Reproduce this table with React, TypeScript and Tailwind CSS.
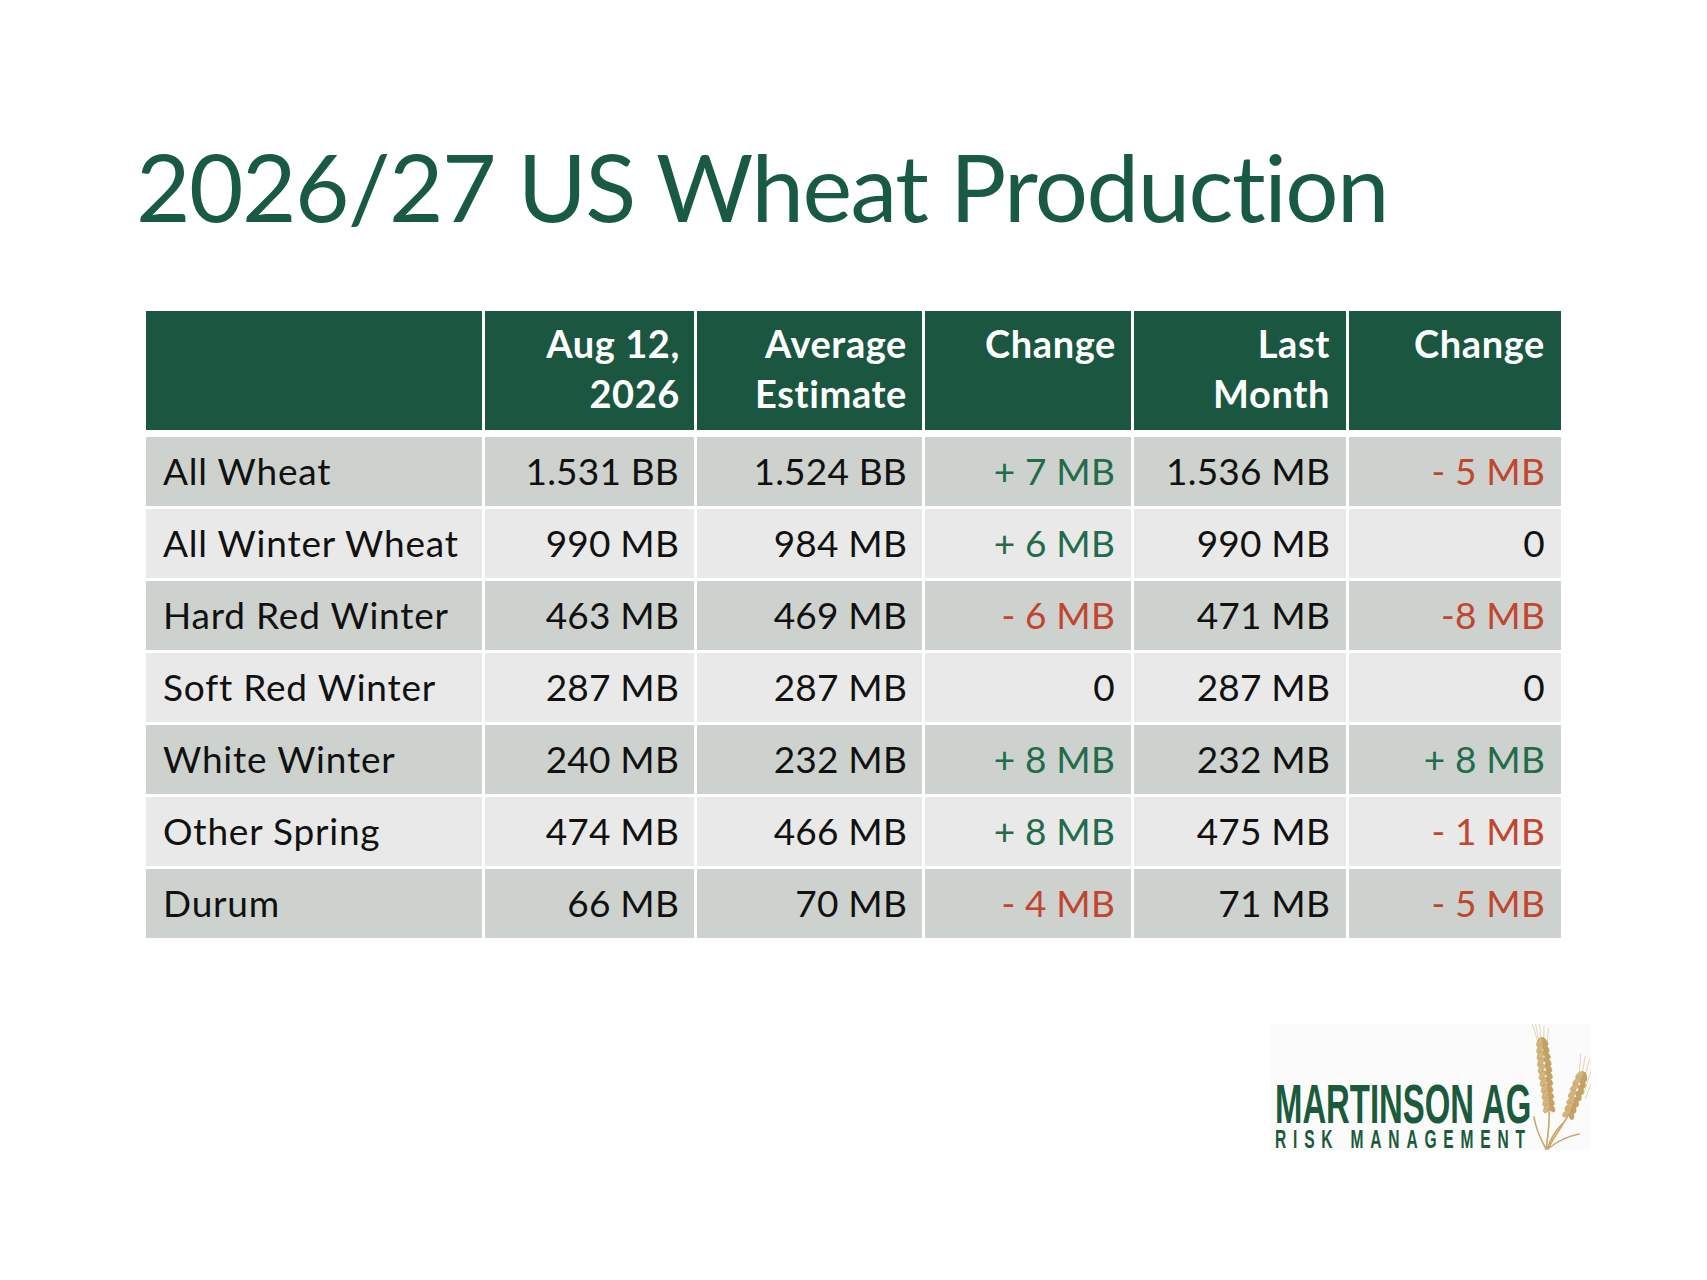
import React from "react";

const rows = [
  { name: "All Wheat", aug: "1.531 BB", avg: "1.524 BB", ch1: "+ 7 MB", last: "1.536 MB", ch2: "- 5 MB" },
  { name: "All Winter Wheat", aug: "990 MB", avg: "984 MB", ch1: "+ 6 MB", last: "990 MB", ch2: "0" },
  { name: "Hard Red Winter", aug: "463 MB", avg: "469 MB", ch1: "- 6 MB", last: "471 MB", ch2: "-8 MB" },
  { name: "Soft Red Winter", aug: "287 MB", avg: "287 MB", ch1: "0", last: "287 MB", ch2: "0" },
  { name: "White Winter", aug: "240 MB", avg: "232 MB", ch1: "+ 8 MB", last: "232 MB", ch2: "+ 8 MB" },
  { name: "Other Spring", aug: "474 MB", avg: "466 MB", ch1: "+ 8 MB", last: "475 MB", ch2: "- 1 MB" },
  { name: "Durum", aug: "66 MB", avg: "70 MB", ch1: "- 4 MB", last: "71 MB", ch2: "- 5 MB" },
];

const changeColor = (v: string) => {
  if (v.startsWith("+")) return "text-[#226b4b]";
  if (v.startsWith("-")) return "text-[#c2452d]";
  return "text-[#111]";
};

// one ear of wheat, from top (x0,y0) to bottom (x1,y1)
const Head = ({ x0, y0, x1, y1, n }: { x0: number; y0: number; x1: number; y1: number; n: number }) => {
  const dx = x1 - x0;
  const dy = y1 - y0;
  const len = Math.sqrt(dx * dx + dy * dy);
  const ux = dx / len;
  const uy = dy / len;
  const ang = (Math.atan2(dy, dx) * 180) / Math.PI - 90;
  const grains = [];
  for (let i = 0; i < n; i++) {
    const t = i / (n - 1);
    const cx = x0 + dx * t;
    const cy = y0 + dy * t;
    const w = 2.4 + 1.1 * Math.sin(Math.PI * Math.min(1, t * 1.4));
    for (const s of [-1, 1]) {
      const gx = cx + s * -uy * w;
      const gy = cy + s * ux * w;
      grains.push(
        <ellipse
          key={`${i}${s}`}
          cx={gx}
          cy={gy}
          rx={2.5}
          ry={5}
          transform={`rotate(${ang + s * 30} ${gx} ${gy})`}
          fill={s < 0 ? "#c6a264" : "#d4b57e"}
          stroke="#b8925a"
          strokeWidth={0.4}
        />
      );
    }
  }
  return (
    <g>
      {[0, 1, 2, 3, 4].map((k) => (
        <line
          key={k}
          x1={x0 + (k - 2) * 1.6}
          y1={y0 + 3 + k * 5}
          x2={x0 - ux * 24 + (k - 2) * 4.5}
          y2={y0 - uy * 24 + k * 2.5}
          stroke="#dccaa4"
          strokeWidth={0.8}
        />
      ))}
      {grains}
    </g>
  );
};

const Wheat = () => (
  <svg width="66" height="127" viewBox="0 0 66 127" className="shrink-0">
    <g fill="none" stroke="#c9a66b" strokeWidth="1.6" strokeLinecap="round">
      <path d="M24 84 C 25 100, 23 112, 21 125" />
      <path d="M44 90 C 36 104, 28 114, 23 125" />
      <path d="M21 125 C 16 116, 11 106, 9 93" />
      <path d="M22 125 C 26 114, 31 106, 37 100" />
      <path d="M24 124 C 34 116, 44 112, 54 110" />
    </g>
    <Head x0={17} y0={18} x1={24} y1={84} n={11} />
    <Head x0={57} y0={52} x1={44} y1={90} n={7} />
  </svg>
);

const cols = "grid grid-cols-[336px_209px_225px_206px_212px_212px] gap-x-[3px]";

const App = () => {
  return (
    <div className="w-full h-[1280px] bg-white overflow-hidden font-['Lato',sans-serif]">
      <h1 className="pt-[139px] pl-[136px] text-[94px] leading-none tracking-[-1.5px] text-[#185b42] [font-variant-ligatures:none]">
        2026/27 US Wheat Production
      </h1>

      <div className="mt-[78px] ml-[146px] w-[1415px]">
        <div className={`${cols} text-[38px] leading-[50px] tracking-[0.6px] font-bold text-white text-right`}>
          <div className="h-[119px] bg-[#1a5640]" />
          <div className="h-[119px] bg-[#1a5640] pt-[7px] pr-[14px]">
            Aug 12,
            <br />
            2026
          </div>
          <div className="h-[119px] bg-[#1a5640] pt-[7px] pr-[15px]">
            Average
            <br />
            Estimate
          </div>
          <div className="h-[119px] bg-[#1a5640] pt-[7px] pr-[15px]">Change</div>
          <div className="h-[119px] bg-[#1a5640] pt-[7px] pr-[16px]">
            Last
            <br />
            Month
          </div>
          <div className="h-[119px] bg-[#1a5640] pt-[7px] pr-[16px]">Change</div>
        </div>

        <div className="mt-[7px] flex flex-col gap-y-[3px] text-[37px] leading-none tracking-[0.2px] text-[#111]">
          {rows.map((r, i) => {
            const bg = i % 2 === 0 ? "bg-[#cdd2ce]" : "bg-[#e8e9e8]";
            return (
              <div key={r.name} className={`${cols} h-[69px]`}>
                <div className={`${bg} flex items-center pl-[17px] pb-[2px] tracking-[0.8px]`}>{r.name}</div>
                <div className={`${bg} flex items-center justify-end pr-[15px] pb-[2px]`}>{r.aug}</div>
                <div className={`${bg} flex items-center justify-end pr-[15px] pb-[2px]`}>{r.avg}</div>
                <div className={`${bg} flex items-center justify-end pr-[16px] pb-[2px] ${changeColor(r.ch1)}`}>
                  {r.ch1}
                </div>
                <div className={`${bg} flex items-center justify-end pr-[16px] pb-[2px]`}>{r.last}</div>
                <div className={`${bg} flex items-center justify-end pr-[16px] pb-[2px] ${changeColor(r.ch2)}`}>
                  {r.ch2}
                </div>
              </div>
            );
          })}
        </div>
      </div>

      <div className="mt-[86px] flex justify-end pr-[116px]">
        <div className="w-[321px] h-[127px] bg-[#fbfbfb] flex pl-[5px]">
          <div className="w-[250px] shrink-0 pt-[57px] font-['Liberation_Sans',Arial,sans-serif] font-bold text-[#1c5a3c]">
            <div className="origin-left scale-x-[0.587] whitespace-nowrap">
              <div className="text-[56px] leading-[46px]">MARTINSON AG</div>
              <div className="text-[26.5px] leading-[24px] tracking-[11.6px]">RISK MANAGEMENT</div>
            </div>
          </div>
          <Wheat />
        </div>
      </div>
    </div>
  );
};

export default App;
